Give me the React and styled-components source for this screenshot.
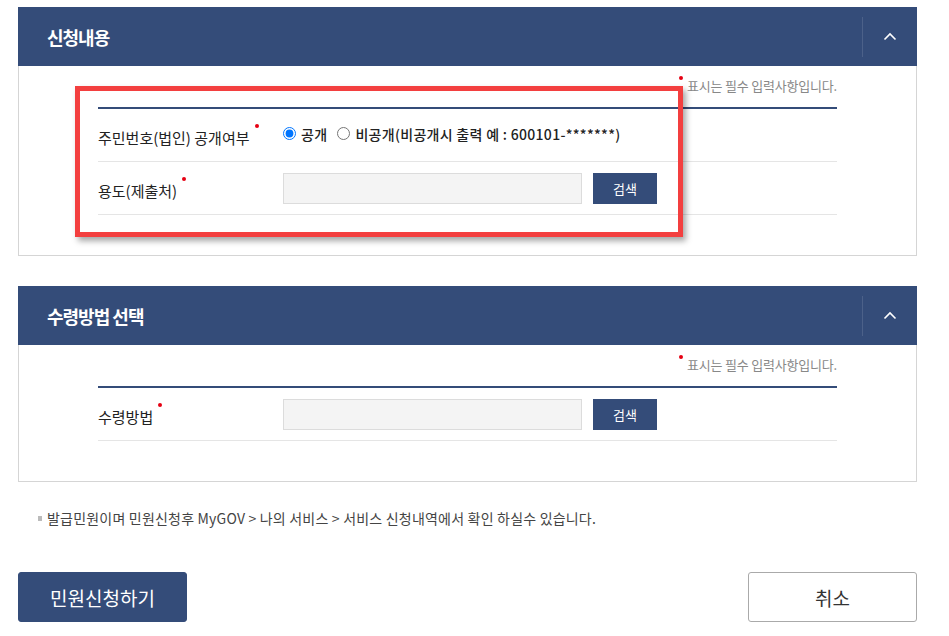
import React from 'react'
import styled, { createGlobalStyle } from 'styled-components'

const GlobalStyle = createGlobalStyle`
  body {
    margin: 0;
    background: #fff;
    font-family: "Noto Sans CJK KR", "Noto Sans", sans-serif;
    color: #222;
  }
  * { box-sizing: border-box; }
`

const Page = styled.div`
  width: 899px;
  margin-left: 18px;
  padding-top: 7px;
`

const Panel = styled.section`
  margin-top: ${(p) => (p.first ? '0' : '30px')};
`

const PanelHeader = styled.div`
  height: 59px;
  background: #344c79;
  display: flex;
  align-items: center;
  justify-content: space-between;
  padding-left: 29px;
`

const PanelTitle = styled.h2`
  margin: 0;
  color: #fff;
  font-size: 18px;
  font-weight: 700;
  letter-spacing: -1px;
`

const Toggle = styled.div`
  width: 55px;
  height: 40px;
  border-left: 1px solid rgba(255, 255, 255, 0.12);
  display: flex;
  align-items: center;
  justify-content: center;
`

const PanelBody = styled.div`
  position: relative;
  border: 1px solid #d5d5d5;
  border-top: none;
  padding: 11px 79px 40px;
`

const RequiredNote = styled.p`
  margin: 0 0 12px;
  text-align: right;
  font-size: 13px;
  line-height: 18px;
  color: #888;
  letter-spacing: -0.2px;

  span {
    position: relative;
  }
  span::before {
    content: '';
    position: absolute;
    left: -8px;
    top: 0;
    width: 4px;
    height: 4px;
    border-radius: 50%;
    background: #e60012;
  }
`

const Table = styled.div`
  border-top: 2px solid #344c79;
`

const Row = styled.div`
  display: flex;
  align-items: center;
  height: 53px;
  border-bottom: 1px solid #e5e5e5;
`

const Label = styled.div`
  width: 185px;
  flex-shrink: 0;
  font-size: 15px;
  color: #222;
  padding-top: 4px;

  span {
    position: relative;
  }
  span::after {
    content: '';
    position: absolute;
    right: -9px;
    top: -3px;
    width: 4px;
    height: 4px;
    border-radius: 50%;
    background: #e60012;
  }
`

const RadioGroup = styled.div`
  display: flex;
  align-items: center;
  gap: 10px;
  margin-top: -3px;
`

const RadioLabel = styled.label`
  display: flex;
  align-items: center;
  gap: 3px;
  font-size: 14px;
  font-weight: 500;
  color: #222;
  letter-spacing: 0.3px;

  input {
    margin: 0 2px 0 0;
    width: 13px;
    height: 13px;
  }
`

const TextInput = styled.input`
  width: 299px;
  height: 31px;
  background: #f4f4f4;
  border: 1px solid #dcdcdc;
  outline: none;
  padding: 0 8px;
`

const SearchButton = styled.button`
  margin-left: 11px;
  width: 64px;
  height: 31px;
  border: none;
  background: #344c79;
  color: #fff;
  font-family: inherit;
  font-size: 13px;
`

const Highlight = styled.div`
  position: absolute;
  left: 56px;
  top: 20px;
  width: 608px;
  height: 151px;
  border: 5px solid #f33f3f;
  box-shadow: 3px 4px 6px rgba(0, 0, 0, 0.35);
  pointer-events: none;
`

const Notice = styled.p`
  margin: 26px 0 0;
  padding-left: 29px;
  position: relative;
  font-size: 14px;
  line-height: 20px;
  color: #444;
  letter-spacing: 0.2px;

  &::before {
    content: '';
    position: absolute;
    left: 20px;
    top: 8px;
    width: 4px;
    height: 5px;
    background: #bbb;
  }
`

const ButtonBar = styled.div`
  display: flex;
  justify-content: space-between;
  margin-top: 44px;
`

const ActionButton = styled.button`
  width: 169px;
  height: 50px;
  border-radius: 3px;
  font-family: inherit;
  font-size: 19px;
  border: 1px solid ${(p) => (p.primary ? '#344c79' : '#aaa')};
  background: ${(p) => (p.primary ? '#344c79' : '#fff')};
  color: ${(p) => (p.primary ? '#fff' : '#333')};
`

const Chevron = () => (
  <svg width="14" height="9" viewBox="0 0 14 9">
    <path d="M1.5 7.5 L7 2 L12.5 7.5" fill="none" stroke="#fff" strokeWidth="1.6" />
  </svg>
)

const SectionPanel = ({ title, first, children, overlay }) => (
  <Panel first={first}>
    <PanelHeader>
      <PanelTitle>{title}</PanelTitle>
      <Toggle>
        <Chevron />
      </Toggle>
    </PanelHeader>
    <PanelBody>
      <RequiredNote>
        <span>표시는 필수 입력사항입니다.</span>
      </RequiredNote>
      <Table>{children}</Table>
      {overlay}
    </PanelBody>
  </Panel>
)

const SearchField = () => (
  <>
    <TextInput type="text" />
    <SearchButton>검색</SearchButton>
  </>
)

export default function App() {
  return (
    <>
      <GlobalStyle />
      <Page>
        <SectionPanel title="신청내용" first overlay={<Highlight />}>
          <Row>
            <Label>
              <span>주민번호(법인) 공개여부</span>
            </Label>
            <RadioGroup>
              <RadioLabel>
                <input type="radio" name="open" defaultChecked />
                공개
              </RadioLabel>
              <RadioLabel>
                <input type="radio" name="open" />
                비공개(비공개시 출력 예 : 600101-*******)
              </RadioLabel>
            </RadioGroup>
          </Row>
          <Row>
            <Label>
              <span>용도(제출처)</span>
            </Label>
            <SearchField />
          </Row>
        </SectionPanel>

        <SectionPanel title="수령방법 선택">
          <Row>
            <Label>
              <span>수령방법</span>
            </Label>
            <SearchField />
          </Row>
        </SectionPanel>

        <Notice>발급민원이며 민원신청후 MyGOV &gt; 나의 서비스 &gt; 서비스 신청내역에서 확인 하실수 있습니다.</Notice>

        <ButtonBar>
          <ActionButton primary>민원신청하기</ActionButton>
          <ActionButton>취소</ActionButton>
        </ButtonBar>
      </Page>
    </>
  )
}
